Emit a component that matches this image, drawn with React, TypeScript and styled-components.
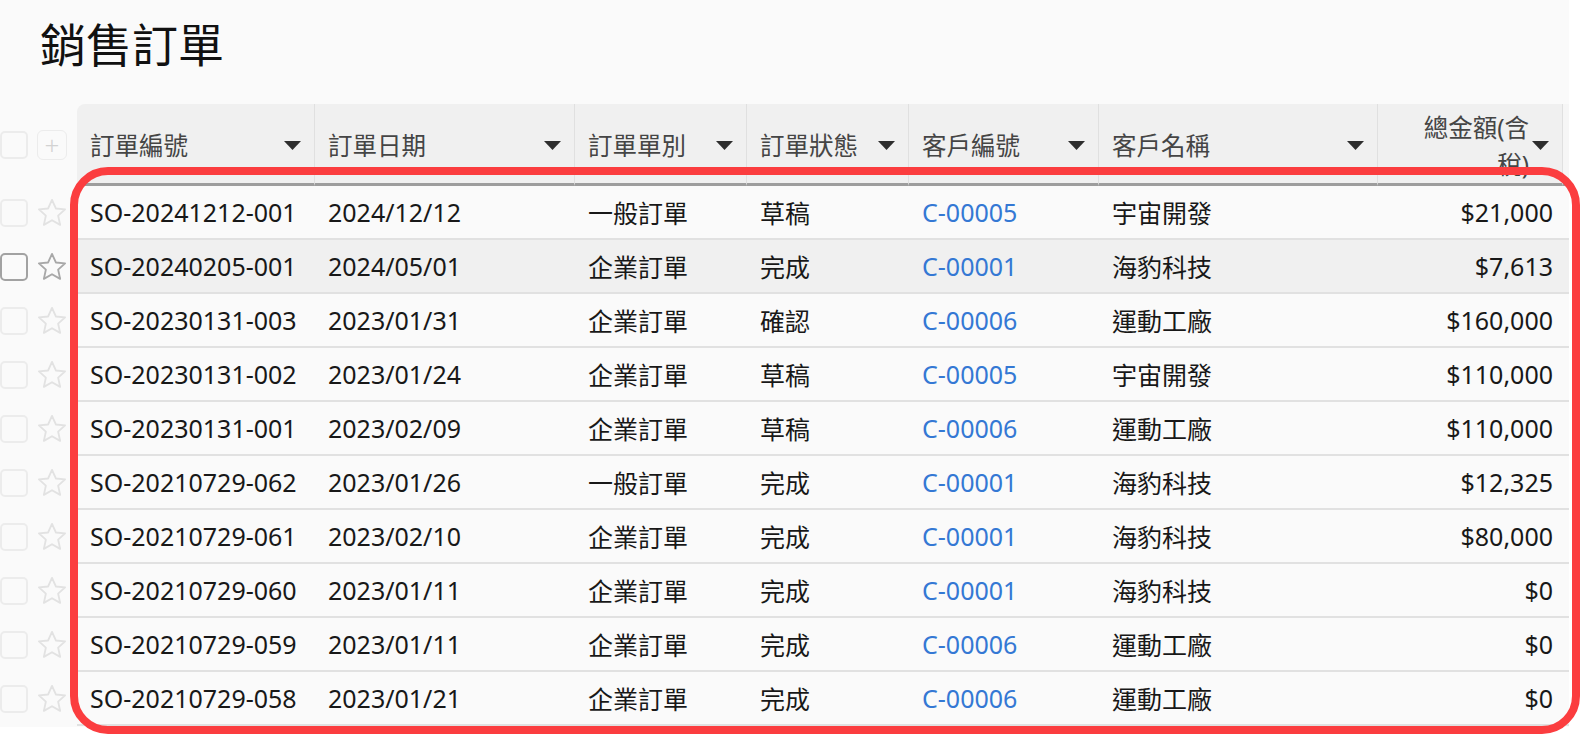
import React from "react";
import styled, { createGlobalStyle } from "styled-components";

const GlobalStyle = createGlobalStyle`
  html, body { margin: 0; padding: 0; background: #ffffff; }
  body { font-family: "Noto Sans", "Noto Sans CJK TC", sans-serif; }
  * { box-sizing: border-box; }
`;

const COLS = "77px 238px 260px 172px 162px 190px 279px 185px 6px";
const ROW_COLS = "77px 238px 260px 172px 162px 190px 279px 191px";

const Wrap = styled.div`
  position: relative;
  width: 1588px;
  height: 740px;
  background: #fff;
`;

const Page = styled.div`
  width: 1569px;
  height: 727px;
  background: #fafafa;
  overflow: hidden;
`;

const Title = styled.h1`
  margin: 0;
  padding: 12px 0 0 40px;
  height: 104px;
  font-family: "Noto Sans CJK TC", "Noto Sans", sans-serif;
  font-weight: 400;
  font-size: 46px;
  line-height: 60px;
  color: #111;
`;

const HeaderRow = styled.div`
  display: grid;
  grid-template-columns: ${COLS};
  height: 82px;
`;

const Gutter = styled.div`
  display: flex;
  align-items: center;
  gap: 8px;
`;

const HeadCell = styled.div<{ $right?: boolean; $first?: boolean }>`
  display: flex;
  align-items: center;
  justify-content: ${(p) => (p.$right ? "flex-end" : "space-between")};
  gap: 3px;
  padding: 4px 13px 0;
  background: #f0f0f0;
  border-bottom: 3px solid #9d9d9d;
  border-right: 1px solid #e0e0e0;
  border-top-left-radius: ${(p) => (p.$first ? "8px" : "0")};
  color: #454545;
  font-size: 24.5px;
  line-height: 37px;
`;

const HeadText = styled.span<{ $right?: boolean }>`
  text-align: ${(p) => (p.$right ? "right" : "left")};
  max-width: ${(p) => (p.$right ? "125px" : "none")};
  overflow: hidden;
  max-height: 74px;
`;

const HeadTail = styled.div`
  background: #f6f6f6;
  border-bottom: 3px solid #9d9d9d;
`;

const Row = styled.div`
  display: grid;
  grid-template-columns: ${ROW_COLS};
  height: 54px;
`;

const Cell = styled.div<{ $hover?: boolean; $right?: boolean; $link?: boolean }>`
  display: flex;
  align-items: center;
  justify-content: ${(p) => (p.$right ? "flex-end" : "flex-start")};
  padding: ${(p) => (p.$right ? "0 16px 0 13px" : "0 13px")};
  background: ${(p) => (p.$hover ? "#f0f0f0" : "#fafafa")};
  border-bottom: 2px solid #e1e1e1;
  font-size: 25px;
  color: ${(p) => (p.$link ? "#3478d4" : "#181818")};
  white-space: nowrap;
`;

const Check = styled.div<{ $strong?: boolean }>`
  width: 28px;
  height: 28px;
  border: 2px solid ${(p) => (p.$strong ? "#a2a2a2" : "#ececec")};
  border-radius: 5px;
  flex: none;
`;

const PlusButton = styled.div`
  width: 30px;
  height: 30px;
  margin-left: 1px;
  border: 1.5px solid #ececec;
  border-radius: 6px;
  display: flex;
  align-items: center;
  justify-content: center;
  color: #d2d2d2;
  font-size: 26px;
  font-weight: 300;
  line-height: 1;
  flex: none;
`;

const Annotation = styled.div`
  position: absolute;
  left: 70px;
  top: 167px;
  width: 1510px;
  height: 567px;
  border: 8px solid #fb3d3f;
  border-radius: 38px;
  pointer-events: none;
`;

const Caret = () => (
  <svg width="17" height="9" viewBox="0 0 17 9" style={{ flex: "none" }}>
    <polygon points="0,0 17,0 8.5,9" fill="#2e2e2e" />
  </svg>
);

const Star = ({ color }: { color: string }) => (
  <svg width="32" height="32" viewBox="0 0 24 24" style={{ flex: "none" }}>
    <polygon
      points="12,2.2 14.9,8.6 21.8,9.3 16.6,14 18.1,20.9 12,17.4 5.9,20.9 7.4,14 2.2,9.3 9.1,8.6"
      fill="none"
      stroke={color}
      strokeWidth="1.4"
      strokeLinejoin="round"
    />
  </svg>
);

const headers = ["訂單編號", "訂單日期", "訂單單別", "訂單狀態", "客戶編號", "客戶名稱"];

const rows: string[][] = [
  ["SO-20241212-001", "2024/12/12", "一般訂單", "草稿", "C-00005", "宇宙開發", "$21,000"],
  ["SO-20240205-001", "2024/05/01", "企業訂單", "完成", "C-00001", "海豹科技", "$7,613"],
  ["SO-20230131-003", "2023/01/31", "企業訂單", "確認", "C-00006", "運動工廠", "$160,000"],
  ["SO-20230131-002", "2023/01/24", "企業訂單", "草稿", "C-00005", "宇宙開發", "$110,000"],
  ["SO-20230131-001", "2023/02/09", "企業訂單", "草稿", "C-00006", "運動工廠", "$110,000"],
  ["SO-20210729-062", "2023/01/26", "一般訂單", "完成", "C-00001", "海豹科技", "$12,325"],
  ["SO-20210729-061", "2023/02/10", "企業訂單", "完成", "C-00001", "海豹科技", "$80,000"],
  ["SO-20210729-060", "2023/01/11", "企業訂單", "完成", "C-00001", "海豹科技", "$0"],
  ["SO-20210729-059", "2023/01/11", "企業訂單", "完成", "C-00006", "運動工廠", "$0"],
  ["SO-20210729-058", "2023/01/21", "企業訂單", "完成", "C-00006", "運動工廠", "$0"],
];

export default function App() {
  return (
    <Wrap>
      <GlobalStyle />
      <Page>
        <Title>銷售訂單</Title>
        <HeaderRow>
          <Gutter>
            <Check />
            <PlusButton>+</PlusButton>
          </Gutter>
          {headers.map((h, i) => (
            <HeadCell key={h} $first={i === 0}>
              <HeadText>{h}</HeadText>
              <Caret />
            </HeadCell>
          ))}
          <HeadCell $right>
            <HeadText $right>總金額(含稅)</HeadText>
            <Caret />
          </HeadCell>
          <HeadTail />
        </HeaderRow>
        {rows.map((r, idx) => {
          const hover = idx === 1;
          return (
            <Row key={r[0]}>
              <Gutter>
                <Check $strong={hover} />
                <Star color={hover ? "#a8a8a8" : "#e2e2e2"} />
              </Gutter>
              {r.map((v, ci) => (
                <Cell key={ci} $hover={hover} $link={ci === 4} $right={ci === 6}>
                  {v}
                </Cell>
              ))}
            </Row>
          );
        })}
      </Page>
      <Annotation />
    </Wrap>
  );
}
